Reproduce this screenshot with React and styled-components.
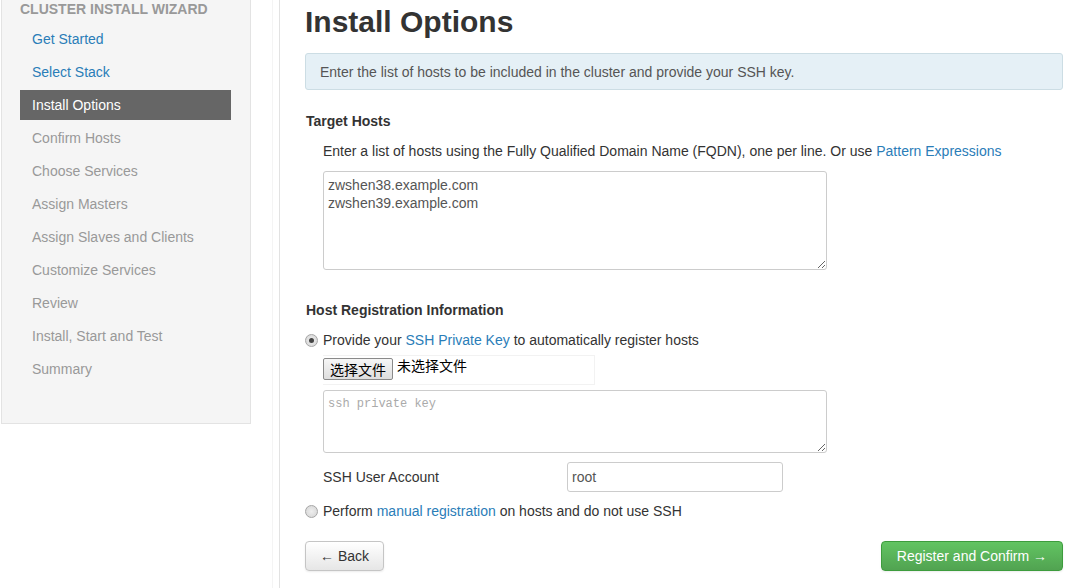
import styled, { createGlobalStyle } from "styled-components";

const Global = createGlobalStyle`
  body {
    margin: 0;
    background: #fff;
    font-family: "Liberation Sans", Arial, sans-serif;
    font-size: 14px;
    color: #333;
  }
`;

const Page = styled.div`
  display: flex;
  width: 1085px;
  height: 588px;
  overflow: hidden;
`;

const SideCol = styled.div`
  width: 279px;
  flex-shrink: 0;
  border-right: 1px solid #e2e2e2;
  box-shadow: inset -6px 0 0 #fff, inset -7px 0 0 #f4f4f4;
`;

const Well = styled.div`
  margin-left: 1px;
  width: 250px;
  height: 424px;
  box-sizing: border-box;
  background: #f5f5f5;
  border: 1px solid #e3e3e3;
  border-top: none;
  padding: 1px 18px 0 18px;
`;

const NavHeader = styled.div`
  font-weight: bold;
  font-size: 14px;
  color: #999;
  text-transform: uppercase;
  line-height: 17px;
  margin-bottom: 6px;
`;

const NavItem = styled.div`
  height: 30px;
  line-height: 30px;
  margin-bottom: 3px;
  padding-left: 12px;
  width: 211px;
  box-sizing: border-box;
  color: ${(p) => (p.active ? "#fff" : p.done ? "#2a7db8" : "#999")};
  background: ${(p) => (p.active ? "#666" : "transparent")};
`;

const Main = styled.div`
  flex: 1;
  padding: 0 22px 0 25px;
`;

const Title = styled.h1`
  margin: 4px 0 13px;
  font-size: 30px;
  line-height: 36px;
  font-weight: bold;
  color: #333;
`;

const Alert = styled.div`
  background: #e5f0f6;
  border: 1px solid #ccdde4;
  border-radius: 3px;
  color: #555;
  padding: 9px 14px 8px;
  line-height: 18px;
  margin-bottom: 21px;
`;

const SectionTitle = styled.h5`
  margin: ${(p) => p.top || 0}px 0 0 1px;
  font-size: 14px;
  font-weight: bold;
  line-height: 20px;
  color: #333;
`;

const Indent = styled.div`
  padding-left: 18px;
`;

const Help = styled.p`
  margin: 10px 0 10px;
  line-height: 20px;
  color: #333;
`;

const Link = styled.a`
  color: #2a7db8;
  text-decoration: none;
`;

const TextArea = styled.textarea`
  display: block;
  width: 504px;
  height: ${(p) => p.h}px;
  box-sizing: border-box;
  border: 1px solid #ccc;
  border-radius: 3px;
  padding: 4px;
  font-family: ${(p) =>
    p.mono ? '"Liberation Mono", monospace' : '"Liberation Sans", Arial, sans-serif'};
  font-size: ${(p) => (p.mono ? "12px" : "14px")};
  line-height: 18px;
  color: #555;
  resize: both;
  &::placeholder {
    color: #aaa;
  }
`;

const RadioRow = styled.label`
  display: flex;
  align-items: center;
  gap: 5px;
  line-height: 20px;
  margin: ${(p) => p.m || "0"};
`;

const Radio = styled.span`
  width: 11px;
  height: 11px;
  border-radius: 50%;
  border: 1px solid #a6a6a6;
  background: radial-gradient(circle, #eee 0, #d4d4d4 100%);
  display: inline-flex;
  align-items: center;
  justify-content: center;
  &::after {
    content: "";
    display: ${(p) => (p.checked ? "block" : "none")};
    width: 5px;
    height: 5px;
    border-radius: 50%;
    background: #444;
  }
`;

const FileRow = styled.div`
  display: flex;
  align-items: flex-start;
  width: 271px;
  height: 28px;
  margin: 5px 0 5px;
  border: 1px solid #f2f2f2;
  border-left: none;
`;

const FileButton = styled.button`
  height: 22px;
  padding: 0 6px;
  font-family: "Noto Sans CJK SC", sans-serif;
  font-size: 14px;
  line-height: 18px;
  color: #000;
  background: linear-gradient(#f6f6f6, #dedede);
  border: 1px solid #8a8a8a;
  border-radius: 2px;
  margin-top: 2px;
`;

const FileText = styled.span`
  margin-left: 4px;
  font-family: "Noto Sans CJK SC", sans-serif;
  font-size: 14px;
  line-height: 18px;
  color: #000;
`;

const FieldRow = styled.div`
  display: flex;
  align-items: center;
  margin: 9px 0 9px;
`;

const FieldLabel = styled.span`
  width: 244px;
  color: #333;
`;

const Input = styled.input`
  width: 216px;
  height: 30px;
  box-sizing: border-box;
  border: 1px solid #ccc;
  border-radius: 3px;
  padding: 4px;
  font-family: "Liberation Sans", Arial, sans-serif;
  font-size: 14px;
  color: #555;
`;

const Actions = styled.div`
  display: flex;
  justify-content: space-between;
  margin-top: 20px;
`;

const Button = styled.button`
  height: 30px;
  padding: 0 ${(p) => (p.primary ? "15px" : "14px")};
  font-family: "Liberation Sans", Arial, sans-serif;
  font-size: 14px;
  border-radius: 4px;
  color: ${(p) => (p.primary ? "#fff" : "#333")};
  border: 1px solid ${(p) => (p.primary ? "#3d9c3d" : "#c5c5c5")};
  background: ${(p) =>
    p.primary
      ? "linear-gradient(#62c462, #51a351)"
      : "linear-gradient(#fff, #e6e6e6)"};
  box-shadow: 0 1px 2px rgba(0, 0, 0, 0.08);
`;

const steps = [
  "Get Started",
  "Select Stack",
  "Install Options",
  "Confirm Hosts",
  "Choose Services",
  "Assign Masters",
  "Assign Slaves and Clients",
  "Customize Services",
  "Review",
  "Install, Start and Test",
  "Summary",
];

const App = () => (
  <Page>
    <Global />
    <SideCol>
      <Well>
        <NavHeader>Cluster Install Wizard</NavHeader>
        {steps.map((s, i) => (
          <NavItem key={s} active={i === 2} done={i < 2}>
            {s}
          </NavItem>
        ))}
      </Well>
    </SideCol>
    <Main>
      <Title>Install Options</Title>
      <Alert>Enter the list of hosts to be included in the cluster and provide your SSH key.</Alert>
      <SectionTitle>Target Hosts</SectionTitle>
      <Indent>
        <Help>
          Enter a list of hosts using the Fully Qualified Domain Name (FQDN), one per line. Or use{" "}
          <Link>Pattern Expressions</Link>
        </Help>
        <TextArea h={99} defaultValue={"zwshen38.example.com\nzwshen39.example.com"} />
      </Indent>
      <SectionTitle top={30}>Host Registration Information</SectionTitle>
      <RadioRow m="10px 0 0 0">
        <Radio checked />
        <span>
          Provide your <Link>SSH Private Key</Link> to automatically register hosts
        </span>
      </RadioRow>
      <Indent>
        <FileRow>
          <FileButton>选择文件</FileButton>
          <FileText>未选择文件</FileText>
        </FileRow>
        <TextArea h={63} mono placeholder="ssh private key" />
        <FieldRow>
          <FieldLabel>SSH User Account</FieldLabel>
          <Input defaultValue="root" />
        </FieldRow>
      </Indent>
      <RadioRow>
        <Radio />
        <span>
          Perform <Link>manual registration</Link> on hosts and do not use SSH
        </span>
      </RadioRow>
      <Actions>
        <Button>← Back</Button>
        <Button primary>Register and Confirm →</Button>
      </Actions>
    </Main>
  </Page>
);

export default App;
